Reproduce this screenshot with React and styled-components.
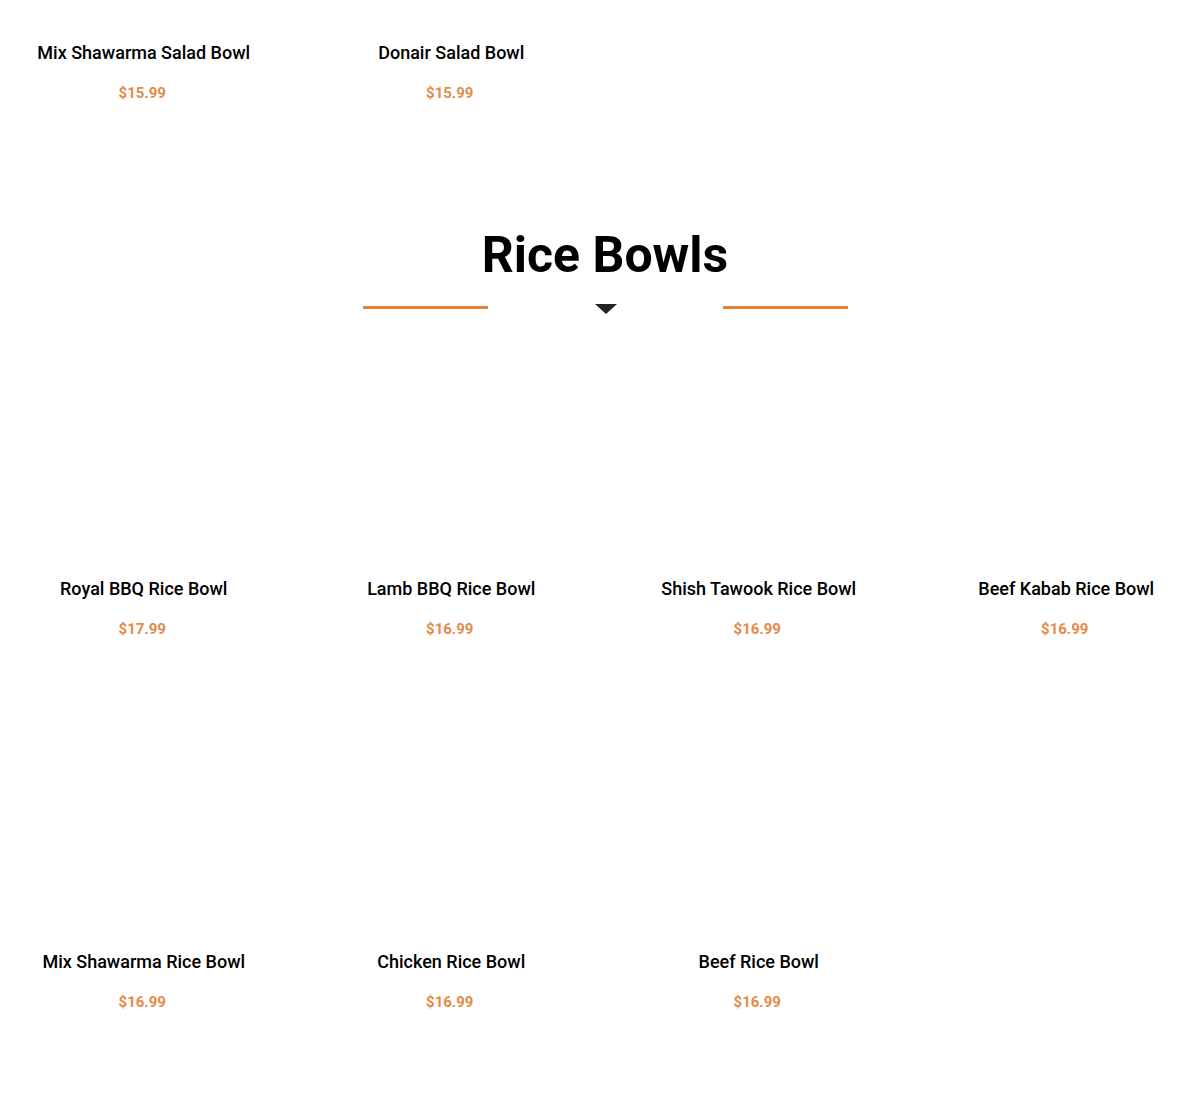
import React from "react";
import styled, { createGlobalStyle } from "styled-components";

const Global = createGlobalStyle`
  html, body { margin: 0; padding: 0; background: #fff; }
  body { overflow: hidden; font-family: Roboto, "Liberation Sans", Arial, sans-serif; }
`;

const Page = styled.div`
  width: 1230px;
  margin-left: -10px;
  margin-top: -199px;
`;

const Section = styled.section`
  display: flex;
  flex-direction: column;
  align-items: center;
  padding-bottom: ${(p) => p.$pb || 0}px;
`;

const Heading = styled.h2`
  margin: 0;
  font-family: Roboto, "Liberation Sans", Arial, sans-serif;
  font-weight: 700;
  font-size: 50px;
  line-height: 60px;
  color: #000;
  text-align: center;
`;

const Divider = styled.div`
  display: flex;
  align-items: flex-start;
  width: 485px;
  justify-content: space-between;
  margin-top: 19px;
  margin-bottom: 23px;
  margin-left: 1px;
  height: 10px;
`;

const Line = styled.span`
  display: block;
  width: 125px;
  height: 3px;
  margin-top: 2px;
  background: #e0823d;
`;

const Triangle = styled.span`
  display: block;
  width: 0;
  height: 0;
  border-left: 11px solid transparent;
  border-right: 11px solid transparent;
  border-top: 10px solid #222;
`;

const Grid = styled.div`
  display: grid;
  grid-template-columns: repeat(4, 307.5px);
  row-gap: 69px;
  width: 1230px;
`;

const Card = styled.div`
  display: flex;
  flex-direction: column;
  align-items: center;
`;

const ImageBox = styled.div`
  width: 100%;
  height: 220px;
`;

const Title = styled.h3`
  margin: 20px 0 0;
  font-family: Roboto, "Liberation Sans", Arial, sans-serif;
  font-weight: 500;
  font-size: 18px;
  line-height: 24px;
  color: #000;
  text-align: center;
`;

const Price = styled.div`
  margin-top: 16px;
  margin-right: 3px;
  font-family: Roboto, "Liberation Sans", Arial, sans-serif;
  font-weight: 700;
  font-size: 15px;
  line-height: 24px;
  color: #e38b48;
`;

const Item = ({ name, price }) => (
  <Card>
    <ImageBox />
    <Title>{name}</Title>
    <Price>{price}</Price>
  </Card>
);

const salad = [
  { name: "Mix Shawarma Salad Bowl", price: "$15.99" },
  { name: "Donair Salad Bowl", price: "$15.99" },
];

const rice = [
  { name: "Royal BBQ Rice Bowl", price: "$17.99" },
  { name: "Lamb BBQ Rice Bowl", price: "$16.99" },
  { name: "Shish Tawook Rice Bowl", price: "$16.99" },
  { name: "Beef Kabab Rice Bowl", price: "$16.99" },
  { name: "Mix Shawarma Rice Bowl", price: "$16.99" },
  { name: "Chicken Rice Bowl", price: "$16.99" },
  { name: "Beef Rice Bowl", price: "$16.99" },
];

export default function App() {
  return (
    <>
      <Global />
      <Page>
        <Section $pb={120}>
          <Grid>
            {salad.map((it) => (
              <Item key={it.name} {...it} />
            ))}
          </Grid>
        </Section>
        <Section>
          <Heading>Rice Bowls</Heading>
          <Divider>
            <Line />
            <Triangle />
            <Line />
          </Divider>
          <Grid>
            {rice.map((it) => (
              <Item key={it.name} {...it} />
            ))}
          </Grid>
        </Section>
      </Page>
    </>
  );
}
